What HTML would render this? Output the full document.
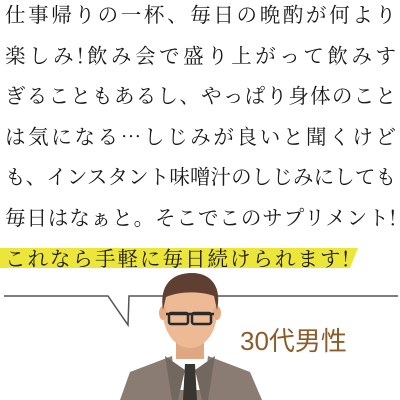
<!DOCTYPE html>
<html><head><meta charset="utf-8"><style>
body{margin:0;width:400px;height:400px;background:#fff;position:relative;overflow:hidden;font-family:"Liberation Sans","Noto Sans CJK JP",sans-serif}
.t{position:absolute;left:5px;top:-7px;width:391px;font-size:20.5px;line-height:40.6px;color:#1a1a1a;font-family:"Noto Serif CJK SC","Noto Sans CJK JP",serif}
.t div{white-space:nowrap;text-align:justify;text-align-last:justify;text-justify:inter-character;letter-spacing:0}
.t div.l{text-align-last:left;letter-spacing:2px}
.age{position:absolute;left:240px;top:321px;font-size:26px;color:#8a5d2b;font-family:"Liberation Sans","Noto Sans CJK JP",sans-serif}
</style></head><body>
<svg width="400" height="400" style="position:absolute;left:0;top:0">
<polygon points="0,248 358,248 350,268 0,268" fill="#ece53a"/>
<polyline points="4,296 108,296 128,325 129,296 398,296" fill="none" stroke="#555" stroke-width="1.5"/>
<polygon points="120,400 130,372 172,356 208,356 250,372 262,400" fill="#8a7c73"/>
<polygon points="172,356 208,356 204,390 176,390" fill="#fff"/>
<polygon points="165,356 185,370 178,400 172,400" fill="#736860"/>
<polygon points="215,356 195,370 202,400 208,400" fill="#736860"/>
<polygon points="185,364 195,364 197,400 183,400" fill="#3a3530"/>
<rect x="176" y="335" width="28" height="24" fill="#e0a882"/>
<ellipse cx="190" cy="312" rx="27" ry="36" fill="#edba95"/>
<ellipse cx="163" cy="313" rx="4" ry="7" fill="#e4ad88"/>
<ellipse cx="217" cy="313" rx="4" ry="7" fill="#e4ad88"/>
<path d="M163,310 C159,285 172,273 192,273 C212,273 222,288 217,310 L214,296 C200,291 180,291 166,297 Z" fill="#603f33"/>
<rect x="169" y="313" width="19" height="11" rx="2" fill="none" stroke="#2a2a2a" stroke-width="2.5"/>
<rect x="192" y="313" width="19" height="11" rx="2" fill="none" stroke="#2a2a2a" stroke-width="2.5"/>
<line x1="166" y1="314" x2="214" y2="314" stroke="#2a2a2a" stroke-width="2.5"/>
</svg>
<div class="t">
<div>仕事帰りの一杯、毎日の晩酌が何より</div>
<div>楽しみ!飲み会で盛り上がって飲みす</div>
<div>ぎることもあるし、やっぱり身体のこと</div>
<div>は気になる…しじみが良いと聞くけど</div>
<div>も、インスタント味噌汁のしじみにしても</div>
<div>毎日はなぁと。そこでこのサプリメント!</div>
<div class="l">これなら手軽に毎日続けられます!</div>
</div>
<div class="age">30代男性</div>
</body></html>
